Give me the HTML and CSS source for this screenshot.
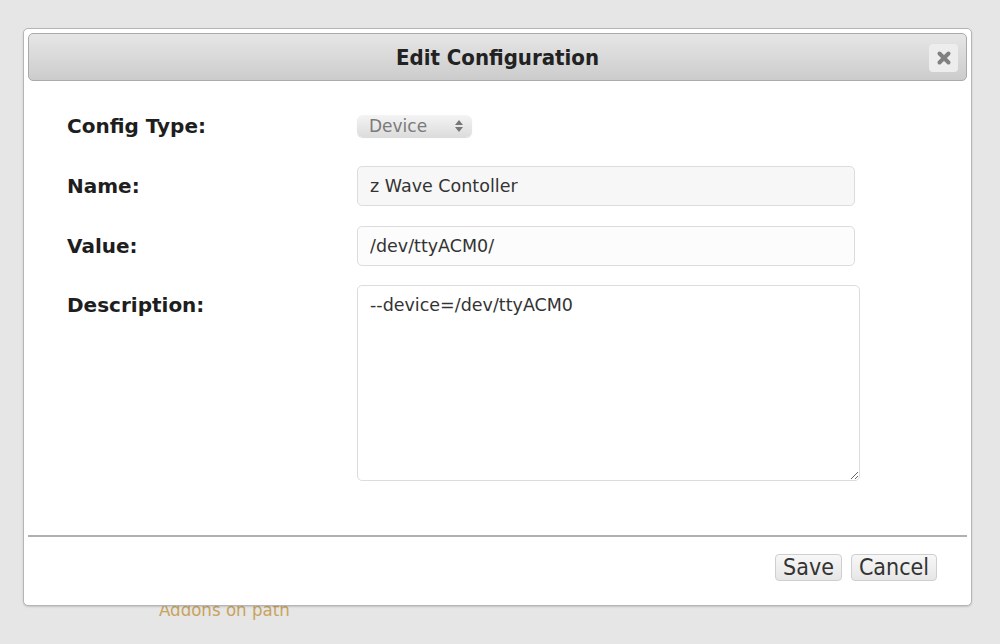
FILE: index.html
```html
<!DOCTYPE html>
<html lang="en">
<head>
    <meta charset="UTF-8">
    <title>Edit Configuration</title>
    <link rel="stylesheet" href="styles.css">
</head>
<body>
    <div class="page">
        <a class="page-link" href="#">Addons on path</a>
    </div>

    <div class="dialog">
        <div class="dialog-header">
            <span class="dialog-title">Edit Configuration</span>
            <button class="close-btn" type="button">
                <svg width="16" height="16" viewBox="0 0 16 16">
                    <path d="M3.5 3.5 L12.5 12.5 M12.5 3.5 L3.5 12.5" stroke="#808080" stroke-width="4" stroke-linecap="round"/>
                </svg>
            </button>
        </div>

        <div class="dialog-body">
            <div class="form-row row-type">
                <label class="form-label">Config Type:</label>
                <div class="select">
                    <span>Device</span>
                    <svg width="10" height="14" viewBox="0 0 10 14">
                        <path d="M5 1 L9 6 L1 6 Z M5 13 L9 8 L1 8 Z" fill="#777"/>
                    </svg>
                </div>
            </div>
            <div class="form-row">
                <label class="form-label">Name:</label>
                <input class="text-input input-name" type="text" value="z Wave Contoller">
            </div>
            <div class="form-row row-value">
                <label class="form-label">Value:</label>
                <input class="text-input" type="text" value="/dev/ttyACM0/">
            </div>
            <div class="form-row row-desc">
                <label class="form-label">Description:</label>
                <textarea class="text-area">--device=/dev/ttyACM0</textarea>
            </div>
        </div>

        <div class="dialog-footer">
            <button class="btn" type="button">Save</button>
            <button class="btn" type="button">Cancel</button>
        </div>
    </div>
</body>
</html>
```

FILE: styles.css
```css
html, body {
    margin: 0;
    height: 100%;
}
body {
    background: #e6e6e6;
    font-family: "DejaVu Sans", Verdana, sans-serif;
    overflow: hidden;
}
.page {
    padding: 599px 0 0 159px;
}
.page-link {
    font-family: "DejaVu Sans Condensed", "DejaVu Sans", sans-serif;
    font-size: 18.5px;
    color: #c9a35d;
    text-decoration: none;
}
.dialog {
    position: absolute;
    left: 23px;
    top: 28px;
    width: 949px;
    height: 578px;
    box-sizing: border-box;
    background: #fff;
    border: 1px solid #b5b5b5;
    border-radius: 5px;
    box-shadow: 0 1px 2px rgba(0, 0, 0, 0.15);
    padding: 4px;
    display: flex;
    flex-direction: column;
}
.dialog-header {
    height: 48px;
    box-sizing: border-box;
    border: 1px solid #aaa;
    border-radius: 5px;
    background: linear-gradient(#e6e6e6, #cccccc);
    display: flex;
    align-items: center;
    justify-content: center;
    position: relative;
}
.dialog-title {
    font-family: "DejaVu Sans Condensed", "DejaVu Sans", sans-serif;
    font-weight: bold;
    font-size: 22px;
    color: #222;
}
.close-btn {
    position: absolute;
    right: 8px;
    top: 10px;
    width: 29px;
    height: 28px;
    border: none;
    border-radius: 4px;
    background: #ededed;
    padding: 0;
    display: flex;
    align-items: center;
    justify-content: center;
}
.dialog-body {
    padding: 33px 0 0 39px;
    flex: 1;
}
.form-row {
    display: flex;
    align-items: center;
    margin-bottom: 20px;
}
.row-type {
    margin-bottom: 28px;
}
.row-value {
    margin-bottom: 19px;
}
.row-desc {
    align-items: flex-start;
}
.form-label {
    width: 290px;
    font-weight: bold;
    font-size: 20px;
    color: #1e1e1e;
}
.row-desc .form-label {
    padding-top: 8px;
}
.select {
    width: 115px;
    height: 22px;
    box-sizing: border-box;
    border-radius: 6px;
    background: linear-gradient(#f4f4f4, #dcdcdc);
    box-shadow: 0 1px 1px rgba(0, 0, 0, 0.15);
    display: flex;
    align-items: center;
    justify-content: space-between;
    padding: 0 8px 0 12px;
    font-size: 17px;
    color: #7a7a7a;
}
.text-input {
    width: 498px;
    height: 40px;
    box-sizing: border-box;
    border: 1px solid #dcdcdc;
    border-radius: 5px;
    background: #fcfcfc;
    padding: 0 12px;
    font-family: "DejaVu Sans", Verdana, sans-serif;
    font-size: 17.5px;
    color: #333;
}
.input-name {
    background: #f7f7f7;
}
.text-area {
    width: 503px;
    height: 196px;
    box-sizing: border-box;
    border: 1px solid #dcdcdc;
    border-radius: 5px;
    background: #fff;
    padding: 9px 12px;
    font-family: "DejaVu Sans", Verdana, sans-serif;
    font-size: 17.5px;
    color: #333;
    resize: both;
}
.dialog-footer {
    border-top: 2px solid #b0b0b0;
    height: 66px;
    box-sizing: border-box;
    display: flex;
    justify-content: flex-end;
    align-items: center;
    gap: 9px;
    padding: 0 30px 4px 0;
}
.btn {
    font-family: "DejaVu Sans Condensed", "DejaVu Sans", sans-serif;
    font-size: 23px;
    color: #333;
    height: 27px;
    padding: 0 7px;
    border: 1px solid #cfcfcf;
    border-radius: 4px;
    background: linear-gradient(#f7f7f7, #e6e6e6);
    line-height: 1;
}
```
